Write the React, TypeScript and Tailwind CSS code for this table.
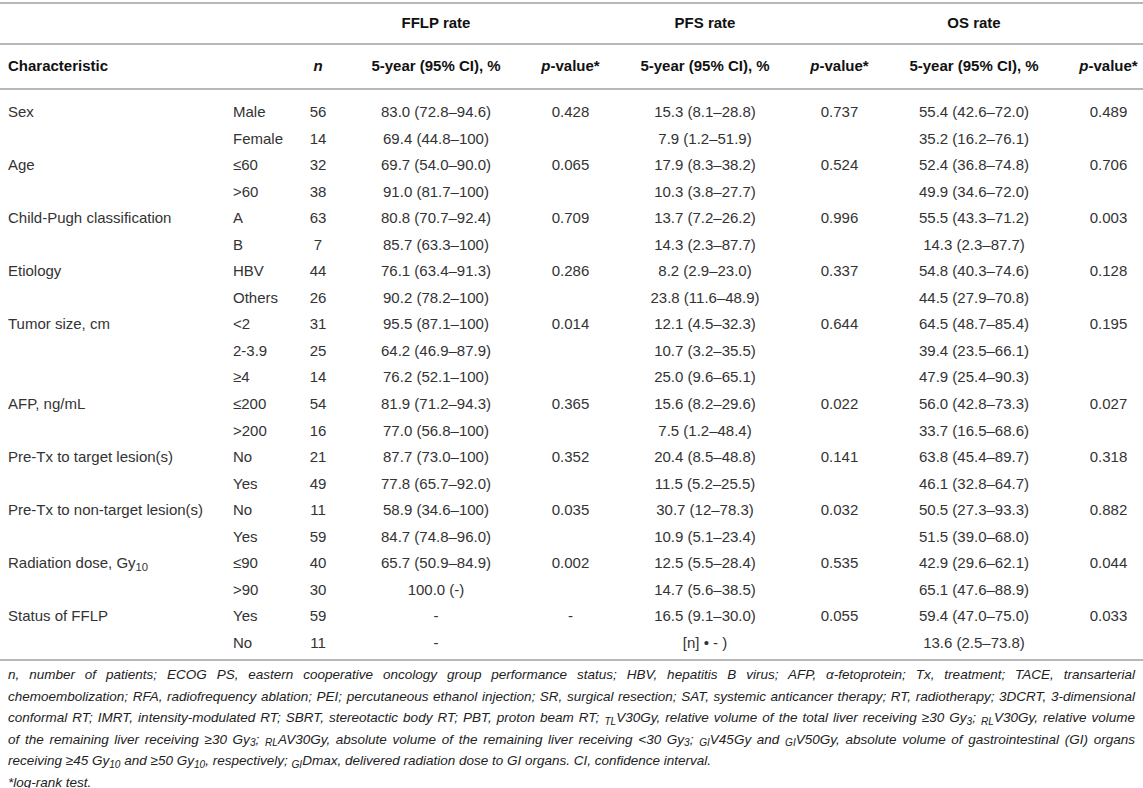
import React from 'react';

type Cell = React.ReactNode;

const grid = 'grid grid-cols-[225px_67px_36px_200px_69px_200px_69px_200px_69px] items-center';

const Line = () => <div className="h-[2px] bg-[#b8b8b8]" />;

const PVal = () => (
  <span>
    <i>p</i>-value*
  </span>
);

const data: Cell[][] = [
  ['Sex', 'Male', '56', '83.0 (72.8–94.6)', '0.428', '15.3 (8.1–28.8)', '0.737', '55.4 (42.6–72.0)', '0.489'],
  ['', 'Female', '14', '69.4 (44.8–100)', '', '7.9 (1.2–51.9)', '', '35.2 (16.2–76.1)', ''],
  ['Age', '≤60', '32', '69.7 (54.0–90.0)', '0.065', '17.9 (8.3–38.2)', '0.524', '52.4 (36.8–74.8)', '0.706'],
  ['', '>60', '38', '91.0 (81.7–100)', '', '10.3 (3.8–27.7)', '', '49.9 (34.6–72.0)', ''],
  ['Child-Pugh classification', 'A', '63', '80.8 (70.7–92.4)', '0.709', '13.7 (7.2–26.2)', '0.996', '55.5 (43.3–71.2)', '0.003'],
  ['', 'B', '7', '85.7 (63.3–100)', '', '14.3 (2.3–87.7)', '', '14.3 (2.3–87.7)', ''],
  ['Etiology', 'HBV', '44', '76.1 (63.4–91.3)', '0.286', '8.2 (2.9–23.0)', '0.337', '54.8 (40.3–74.6)', '0.128'],
  ['', 'Others', '26', '90.2 (78.2–100)', '', '23.8 (11.6–48.9)', '', '44.5 (27.9–70.8)', ''],
  ['Tumor size, cm', '<2', '31', '95.5 (87.1–100)', '0.014', '12.1 (4.5–32.3)', '0.644', '64.5 (48.7–85.4)', '0.195'],
  ['', '2-3.9', '25', '64.2 (46.9–87.9)', '', '10.7 (3.2–35.5)', '', '39.4 (23.5–66.1)', ''],
  ['', '≥4', '14', '76.2 (52.1–100)', '', '25.0 (9.6–65.1)', '', '47.9 (25.4–90.3)', ''],
  ['AFP, ng/mL', '≤200', '54', '81.9 (71.2–94.3)', '0.365', '15.6 (8.2–29.6)', '0.022', '56.0 (42.8–73.3)', '0.027'],
  ['', '>200', '16', '77.0 (56.8–100)', '', '7.5 (1.2–48.4)', '', '33.7 (16.5–68.6)', ''],
  ['Pre-Tx to target lesion(s)', 'No', '21', '87.7 (73.0–100)', '0.352', '20.4 (8.5–48.8)', '0.141', '63.8 (45.4–89.7)', '0.318'],
  ['', 'Yes', '49', '77.8 (65.7–92.0)', '', '11.5 (5.2–25.5)', '', '46.1 (32.8–64.7)', ''],
  ['Pre-Tx to non-target lesion(s)', 'No', '11', '58.9 (34.6–100)', '0.035', '30.7 (12–78.3)', '0.032', '50.5 (27.3–93.3)', '0.882'],
  ['', 'Yes', '59', '84.7 (74.8–96.0)', '', '10.9 (5.1–23.4)', '', '51.5 (39.0–68.0)', ''],
  [
    <span>
      Radiation dose, Gy<sub>10</sub>
    </span>,
    '≤90', '40', '65.7 (50.9–84.9)', '0.002', '12.5 (5.5–28.4)', '0.535', '42.9 (29.6–62.1)', '0.044',
  ],
  ['', '>90', '30', '100.0 (-)', '', '14.7 (5.6–38.5)', '', '65.1 (47.6–88.9)', ''],
  ['Status of FFLP', 'Yes', '59', '-', '-', '16.5 (9.1–30.0)', '0.055', '59.4 (47.0–75.0)', '0.033'],
  ['', 'No', '11', '-', '', '[n] • - )', '', '13.6 (2.5–73.8)', ''],
];

export default function App() {
  return (
    <div className="w-[1143px] bg-white pt-[2px] font-['Liberation_Sans',Arial,sans-serif] text-[15px] text-[#333]">
      <Line />
      {/* group headers, each over its 5-year column */}
      <div className={`${grid} h-[39px] pl-[8px] font-bold text-[#111]`}>
        <div />
        <div />
        <div />
        <div className="text-center">FFLP rate</div>
        <div />
        <div className="text-center">PFS rate</div>
        <div />
        <div className="text-center">OS rate</div>
        <div />
      </div>
      <Line />
      <div className={`${grid} h-[43px] pl-[8px] font-bold text-[#111]`}>
        <div>Characteristic</div>
        <div />
        <div className="text-center italic">n</div>
        <div className="text-center">5-year (95% CI), %</div>
        <div className="text-center"><PVal /></div>
        <div className="text-center">5-year (95% CI), %</div>
        <div className="text-center"><PVal /></div>
        <div className="text-center">5-year (95% CI), %</div>
        <div className="text-center"><PVal /></div>
      </div>
      <Line />
      <div className="pt-[9px] pb-[3px] pl-[8px]">
        {data.map((row, i) => (
          <div key={i} className={`${grid} h-[26.55px]`}>
            {row.map((c, j) => (
              <div key={j} className={j < 2 ? 'whitespace-nowrap' : 'whitespace-nowrap text-center'}>
                {c}
              </div>
            ))}
          </div>
        ))}
      </div>
      <Line />
      <div className="px-[8px] pt-[3px] text-[13.5px] italic leading-[21.4px] text-[#222]">
        <div className="text-justify [text-align-last:justify]">
          n, number of patients; ECOG PS, eastern cooperative oncology group performance status; HBV, hepatitis B virus; AFP, α-fetoprotein; Tx, treatment; TACE, transarterial
        </div>
        <div className="text-justify [text-align-last:justify]">
          chemoembolization; RFA, radiofrequency ablation; PEI; percutaneous ethanol injection; SR, surgical resection; SAT, systemic anticancer therapy; RT, radiotherapy; 3DCRT, 3-dimensional
        </div>
        <div className="text-justify [text-align-last:justify]">
          conformal RT; IMRT, intensity-modulated RT; SBRT, stereotactic body RT; PBT, proton beam RT; <sub>TL</sub>V30Gy, relative volume of the total liver receiving ≥30 Gy<sub>3</sub>; <sub>RL</sub>V30Gy, relative volume
        </div>
        <div className="text-justify [text-align-last:justify]">
          of the remaining liver receiving ≥30 Gy<sub>3</sub>; <sub>RL</sub>AV30Gy, absolute volume of the remaining liver receiving &lt;30 Gy<sub>3</sub>; <sub>GI</sub>V45Gy and <sub>GI</sub>V50Gy, absolute volume of gastrointestinal (GI) organs
        </div>
        <div>
          receiving ≥45 Gy<sub>10</sub> and ≥50 Gy<sub>10</sub>, respectively; <sub>GI</sub>Dmax, delivered radiation dose to GI organs. CI, confidence interval.
        </div>
        <div>*log-rank test.</div>
      </div>
    </div>
  );
}
